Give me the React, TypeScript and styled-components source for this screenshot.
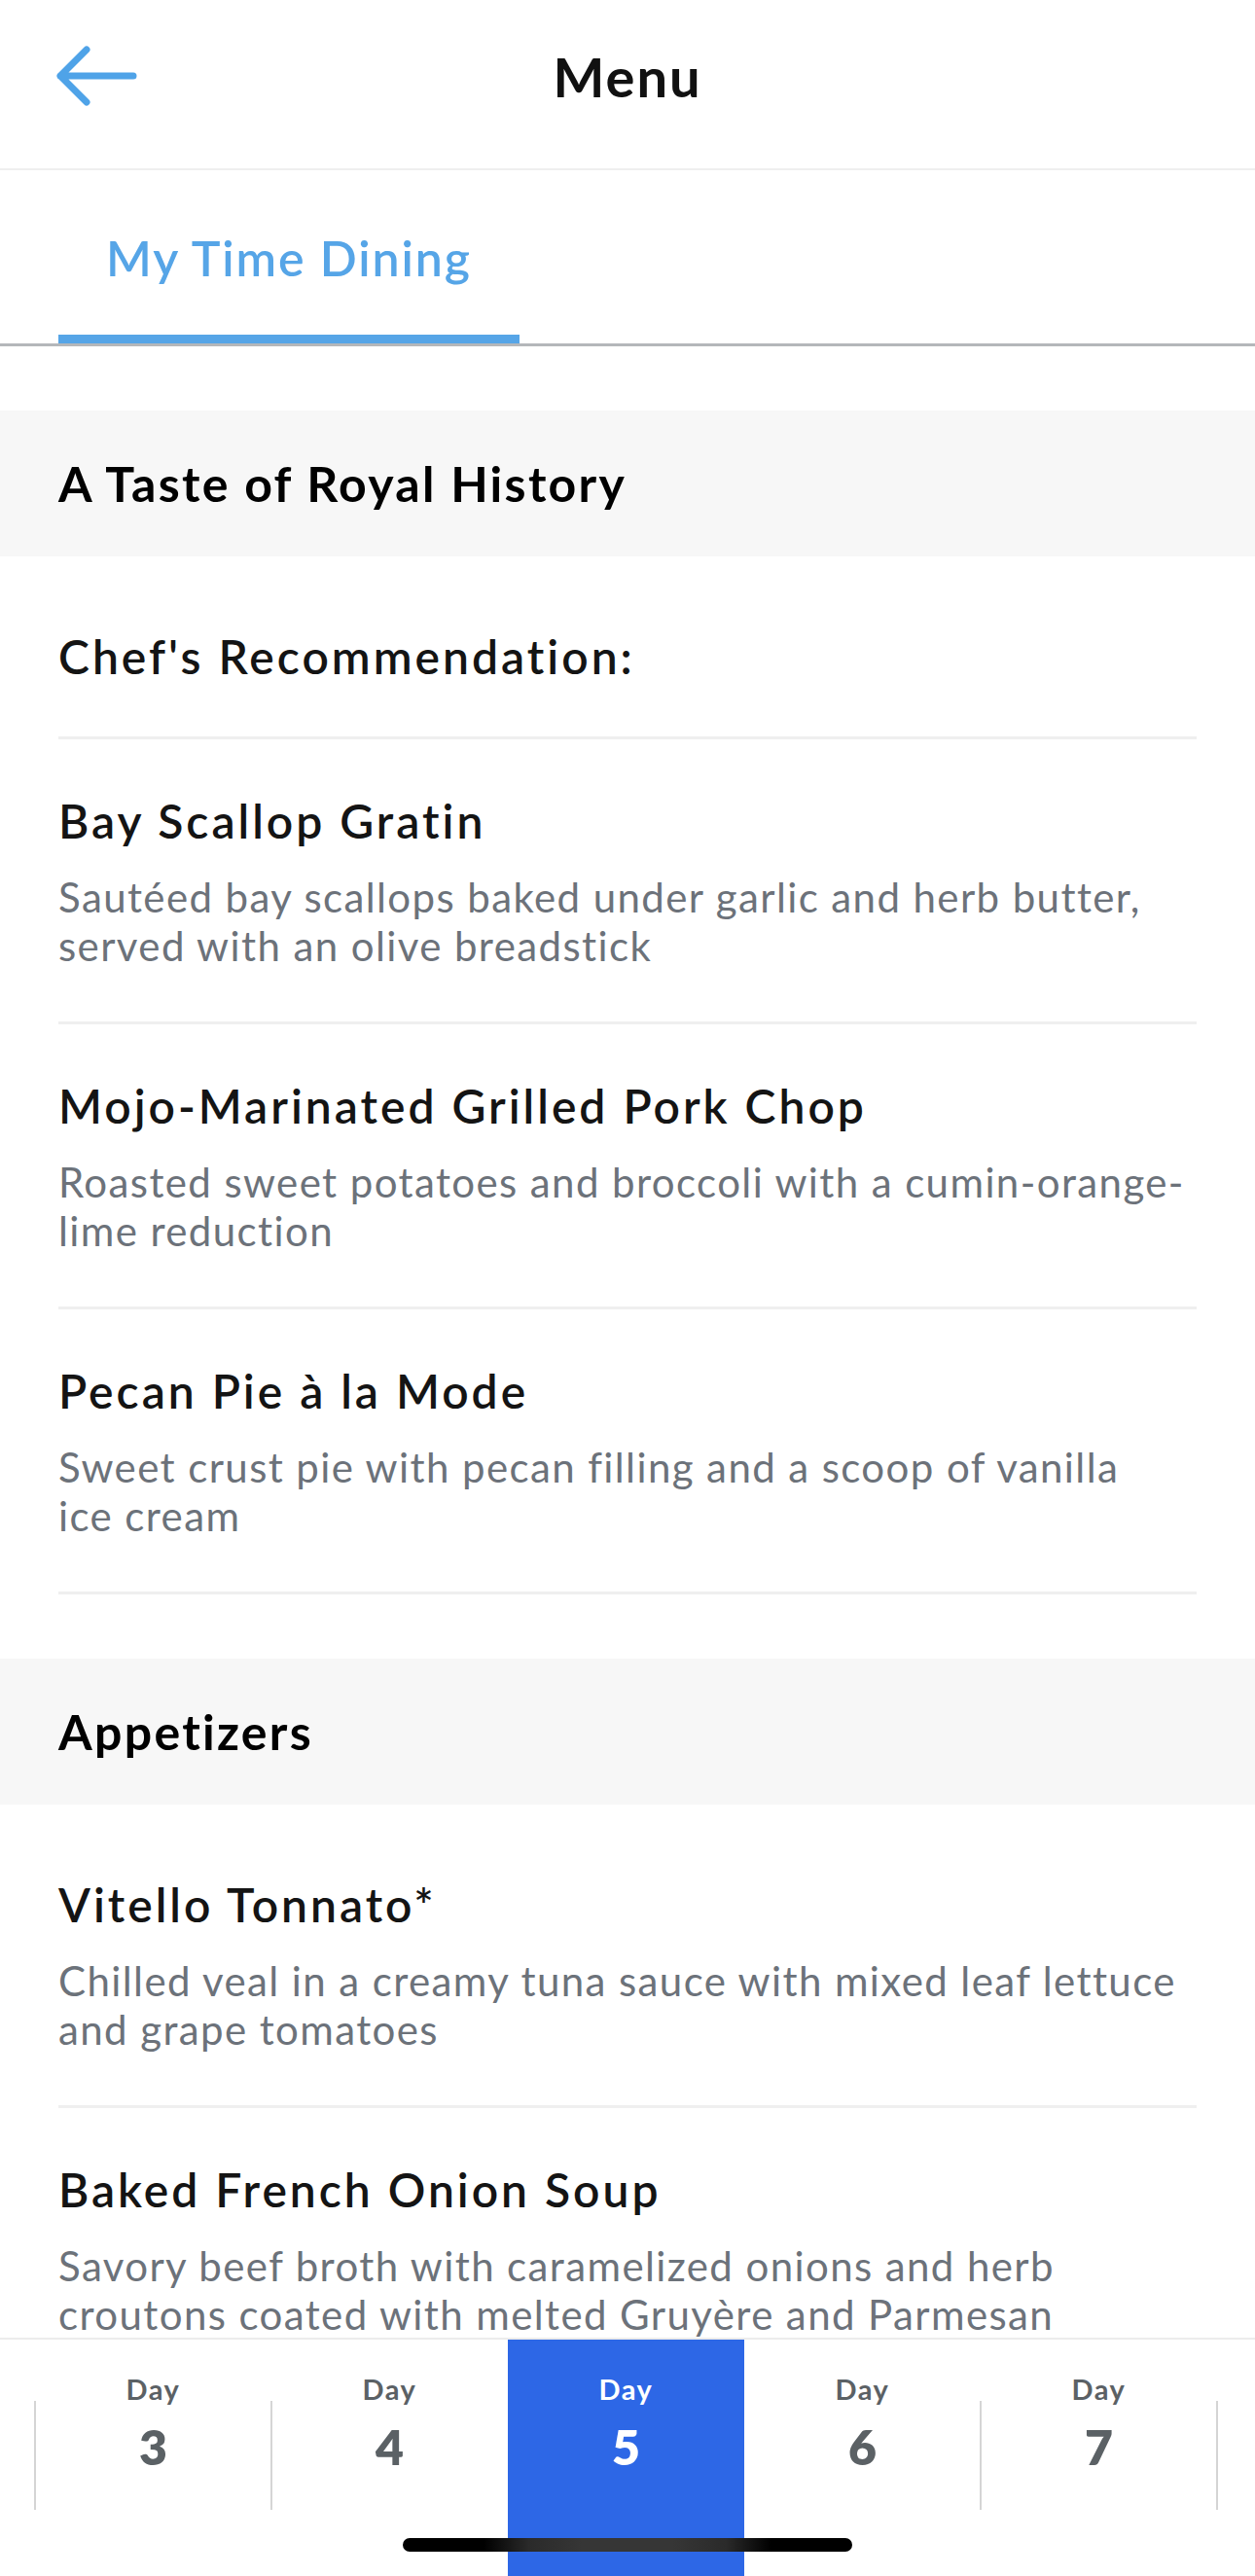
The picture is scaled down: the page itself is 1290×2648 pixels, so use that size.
import React from 'react';
import styled, { createGlobalStyle } from 'styled-components';

type Dish = { name: string; description?: string };
type Section = { title: string; dishes: Dish[] };

const sections: Section[] = [
	{
		title: 'A Taste of Royal History',
		dishes: [
			{ name: "Chef's Recommendation:" },
			{
				name: 'Bay Scallop Gratin',
				description: 'Sautéed bay scallops baked under garlic and herb butter, served with an olive breadstick',
			},
			{
				name: 'Mojo-Marinated Grilled Pork Chop',
				description: 'Roasted sweet potatoes and broccoli with a cumin-orange-lime reduction',
			},
			{
				name: 'Pecan Pie à la Mode',
				description: 'Sweet crust pie with pecan filling and a scoop of vanilla ice cream',
			},
		],
	},
	{
		title: 'Appetizers',
		dishes: [
			{
				name: 'Vitello Tonnato*',
				description: 'Chilled veal in a creamy tuna sauce with mixed leaf lettuce and grape tomatoes',
			},
			{
				name: 'Baked French Onion Soup',
				description: 'Savory beef broth with caramelized onions and herb croutons coated with melted Gruyère and Parmesan',
			},
		],
	},
];

const days = [3, 4, 5, 6, 7];
const activeDay = 5;

const GlobalStyle = createGlobalStyle`
	* { box-sizing: border-box; }
	html, body { margin: 0; padding: 0; background: #fff; }
	body { font-family: Lato, 'Liberation Sans', sans-serif; }
`;

const BackArrow = (): JSX.Element => (
	<svg width="84" height="66" viewBox="0 0 84 66" fill="none">
		<path
			d="M4 33 H79 M31 6 L4 33 L31 60"
			stroke="#4fa3e8"
			strokeWidth="7"
			strokeLinecap="round"
			strokeLinejoin="round"
		/>
	</svg>
);

const App = (): JSX.Element => {
	return (
		<>
			<GlobalStyle />
			<Screen>
				<Header>
					<HeaderRow>
						<BackButton aria-label="Back">
							<BackArrow />
						</BackButton>
						<Title>Menu</Title>
						<span />
					</HeaderRow>
				</Header>

				<TabBar>
					<Tab $active>My Time Dining</Tab>
				</TabBar>

				<Content>
					{sections.map((section) => (
						<MenuSection key={section.title}>
							<SectionHeader>{section.title}</SectionHeader>
							<DishList>
								{section.dishes.map((dish) => (
									<DishRow key={dish.name}>
										<DishName>{dish.name}</DishName>
										{dish.description && <DishDescription>{dish.description}</DishDescription>}
									</DishRow>
								))}
							</DishList>
						</MenuSection>
					))}
				</Content>

				<DayBar>
					<DayRow>
						{days.map((day, i) => {
							const active = day === activeDay;
							const afterActive = days[i - 1] === activeDay;
							return (
								<DayCell
									key={day}
									$active={active}
									$divider={!active && !afterActive}
									$last={i === days.length - 1}
								>
									<DayLabel $active={active}>Day</DayLabel>
									<DayNumber $active={active}>{day}</DayNumber>
								</DayCell>
							);
						})}
					</DayRow>
					<HomeIndicator />
				</DayBar>
			</Screen>
		</>
	);
};

const Screen = styled.div`
	display: flex;
	flex-direction: column;
	height: 100vh;
	overflow: hidden;
	background: #fff;
`;

const Header = styled.header`
	flex-shrink: 0;
	padding-bottom: 17px;
	border-bottom: 2px solid #efefef;
`;

const HeaderRow = styled.div`
	display: grid;
	grid-template-columns: 1fr auto 1fr;
	align-items: center;
	height: 156px;
`;

const BackButton = styled.button`
	display: flex;
	align-items: center;
	justify-self: start;
	margin-left: 58px;
	padding: 0;
	border: none;
	background: none;
	cursor: pointer;
`;

const Title = styled.h1`
	margin: 0;
	font-size: 56px;
	font-weight: 700;
	color: #111;
	letter-spacing: 2px;
`;

const TabBar = styled.nav`
	flex-shrink: 0;
	display: flex;
	padding-left: 60px;
	border-bottom: 3px solid #b4b7ba;
`;

const Tab = styled.div<{ $active?: boolean }>`
	padding: 60px 49px 49px;
	font-size: 50px;
	line-height: 60px;
	font-weight: 600;
	letter-spacing: 1.9px;
	color: ${(p) => (p.$active ? '#56a5e7' : '#777')};
	border-bottom: 9px solid ${(p) => (p.$active ? '#56a5e7' : 'transparent')};
`;

const Content = styled.main`
	flex: 1;
	overflow: hidden;
`;

const MenuSection = styled.section`
	margin-top: 66px;
`;

const SectionHeader = styled.h2`
	display: flex;
	align-items: center;
	height: 150px;
	margin: 0;
	padding: 0 60px;
	background: #f7f7f7;
	font-size: 50px;
	line-height: 60px;
	font-weight: 700;
	letter-spacing: 2.3px;
	color: #000;
`;

const DishList = styled.ul`
	list-style: none;
	margin: 0;
	padding: 19px 60px 0;
`;

const DishRow = styled.li`
	padding: 55px 0 53px;
	border-bottom: 3px solid #efefef;
`;

const DishName = styled.div`
	font-size: 48px;
	line-height: 58px;
	font-weight: 600;
	letter-spacing: 3px;
	color: #141414;
`;

const DishDescription = styled.p`
	margin: 24px 0 0;
	font-size: 42px;
	line-height: 50px;
	font-weight: 400;
	letter-spacing: 1.4px;
	color: #6c727a;
	text-wrap: pretty;
`;

const DayBar = styled.footer`
	position: relative;
	flex-shrink: 0;
	height: 245px;
	border-top: 2px solid #ececec;
	background: #fff;
`;

const DayRow = styled.div`
	display: flex;
	height: 100%;
	padding-left: 36px;
`;

const DayCell = styled.div<{ $active: boolean; $divider: boolean; $last: boolean }>`
	position: relative;
	display: flex;
	flex-direction: column;
	align-items: center;
	width: 243px;
	padding-top: 33px;
	background: ${(p) => (p.$active ? '#2d67e6' : 'transparent')};

	&::before,
	&::after {
		content: '';
		position: absolute;
		top: 63px;
		width: 2px;
		height: 112px;
		background: #d5d5d5;
	}

	&::before {
		left: -1px;
		display: ${(p) => (p.$divider ? 'block' : 'none')};
	}

	&::after {
		right: -1px;
		display: ${(p) => (p.$last ? 'block' : 'none')};
	}
`;

const DayLabel = styled.span<{ $active: boolean }>`
	font-size: 29px;
	line-height: 35px;
	font-weight: 700;
	letter-spacing: 1.5px;
	color: ${(p) => (p.$active ? '#fff' : '#5b6165')};
`;

const DayNumber = styled.span<{ $active: boolean }>`
	margin-top: 12px;
	font-size: 50px;
	line-height: 60px;
	font-weight: 800;
	color: ${(p) => (p.$active ? '#fff' : '#5b6165')};
`;

const HomeIndicator = styled.div`
	position: absolute;
	left: 50%;
	bottom: 25px;
	width: 462px;
	height: 14px;
	margin-left: -231px;
	border-radius: 7px;
	background: linear-gradient(
		90deg,
		#000 0%,
		#000 18%,
		#2a2a2a 28%,
		#363636 40%,
		#363636 60%,
		#2a2a2a 72%,
		#000 82%,
		#000 100%
	);
`;

export default App;
